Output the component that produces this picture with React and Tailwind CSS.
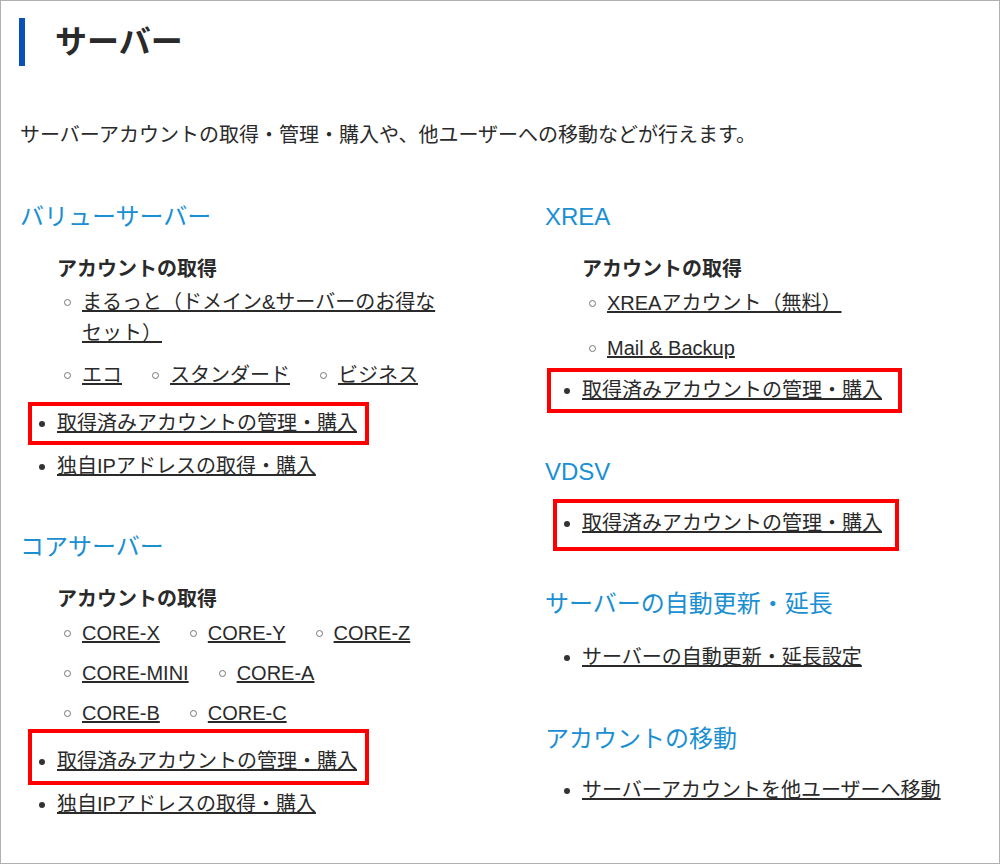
import React from "react";

/* -------------------- List pieces -------------------- */
function SubItem({ children }) {
  return (
    <li className="flex items-start">
      <span className="mt-[12px] mr-[11px] h-[7px] w-[7px] shrink-0 rounded-full border border-[#777]" />
      <a href="#" className="underline">
        {children}
      </a>
    </li>
  );
}

// `mark` = position classes for the red highlight frame around the row
function MainItem({ children, mark }) {
  return (
    <li className="relative flex w-fit items-center pl-[19px]">
      <span className="mr-[12px] h-[6px] w-[6px] shrink-0 rounded-full bg-[#333]" />
      <a href="#" className="underline">
        {children}
      </a>
      {mark && (
        <span className={`pointer-events-none absolute border-4 border-[#f00] ${mark}`} />
      )}
    </li>
  );
}

function Heading({ children }) {
  return <h2 className="text-[24px] leading-[36px] text-[#1a8fd2]">{children}</h2>;
}

function SubHeading({ children }) {
  return <p className="font-bold">{children}</p>;
}

/* -------------------- Page -------------------- */
export default function App() {
  return (
    <div className="h-[864px] w-[1000px] border border-[#b0b0b0] bg-white font-['Liberation_Sans','Noto_Sans_CJK_JP',sans-serif] text-[20px] leading-[31px] text-[#2a2a2a]">
      {/* Title */}
      <header className="flex items-center pt-[17px] pl-[18px]">
        <span className="h-[48px] w-[6px] bg-[#0a52b8]" />
        <h1 className="ml-[30px] text-[32px] leading-[48px] font-bold text-[#2a2a2a]">サーバー</h1>
      </header>

      <p className="mt-[54px] pl-[19px]">
        サーバーアカウントの取得・管理・購入や、他ユーザーへの移動などが行えます。
      </p>

      <div className="mt-[48px] grid grid-cols-[419px_1fr] gap-x-[106px] pl-[19px]">
        {/* Left column */}
        <div>
          <section>
            <Heading>バリューサーバー</Heading>
            <div className="mt-[19px] pl-[37px]">
              <SubHeading>アカウントの取得</SubHeading>
              <ul className="mt-[2px] flex flex-wrap gap-x-[30px] gap-y-[11px] pl-[7px]">
                <SubItem>まるっと（ドメイン&amp;サーバーのお得なセット）</SubItem>
                <SubItem>エコ</SubItem>
                <SubItem>スタンダード</SubItem>
                <SubItem>ビジネス</SubItem>
              </ul>
            </div>
            <ul className="mt-[17px] flex flex-col gap-[12px]">
              <MainItem mark="left-[8px] -right-[12px] -top-[6px] -bottom-[6px]">
                取得済みアカウントの管理・購入
              </MainItem>
              <MainItem>独自IPアドレスの取得・購入</MainItem>
            </ul>
          </section>

          <section className="mt-[47px]">
            <Heading>コアサーバー</Heading>
            <div className="mt-[19px] pl-[37px]">
              <SubHeading>アカウントの取得</SubHeading>
              <ul className="mt-[3px] flex flex-wrap gap-x-[30px] gap-y-[9px] pl-[7px]">
                <SubItem>CORE-X</SubItem>
                <SubItem>CORE-Y</SubItem>
                <SubItem>CORE-Z</SubItem>
                <SubItem>CORE-MINI</SubItem>
                <SubItem>CORE-A</SubItem>
                <SubItem>CORE-B</SubItem>
                <SubItem>CORE-C</SubItem>
              </ul>
            </div>
            <ul className="mt-[17px] flex flex-col gap-[12px]">
              <MainItem mark="left-[8px] -right-[12px] -top-[17px] -bottom-[8px]">
                取得済みアカウントの管理・購入
              </MainItem>
              <MainItem>独自IPアドレスの取得・購入</MainItem>
            </ul>
          </section>
        </div>

        {/* Right column */}
        <div>
          <section>
            <Heading>XREA</Heading>
            <div className="mt-[19px] pl-[37px]">
              <SubHeading>アカウントの取得</SubHeading>
              <ul className="mt-[3px] flex flex-col gap-[14px] pl-[7px]">
                <SubItem>XREAアカウント（無料）</SubItem>
                <SubItem>Mail &amp; Backup</SubItem>
              </ul>
            </div>
            <ul className="mt-[11px]">
              <MainItem mark="left-[2px] -right-[20px] -top-[7px] -bottom-[7px]">
                取得済みアカウントの管理・購入
              </MainItem>
            </ul>
          </section>

          <section className="mt-[48px]">
            <Heading>VDSV</Heading>
            <ul className="mt-[18px]">
              <MainItem mark="left-[8px] -right-[17px] -top-[9px] -bottom-[12px]">
                取得済みアカウントの管理・購入
              </MainItem>
            </ul>
          </section>

          <section className="mt-[47px]">
            <Heading>サーバーの自動更新・延長</Heading>
            <ul className="mt-[20px]">
              <MainItem>サーバーの自動更新・延長設定</MainItem>
            </ul>
          </section>

          <section className="mt-[48px]">
            <Heading>アカウントの移動</Heading>
            <ul className="mt-[18px]">
              <MainItem>サーバーアカウントを他ユーザーへ移動</MainItem>
            </ul>
          </section>
        </div>
      </div>
    </div>
  );
}
